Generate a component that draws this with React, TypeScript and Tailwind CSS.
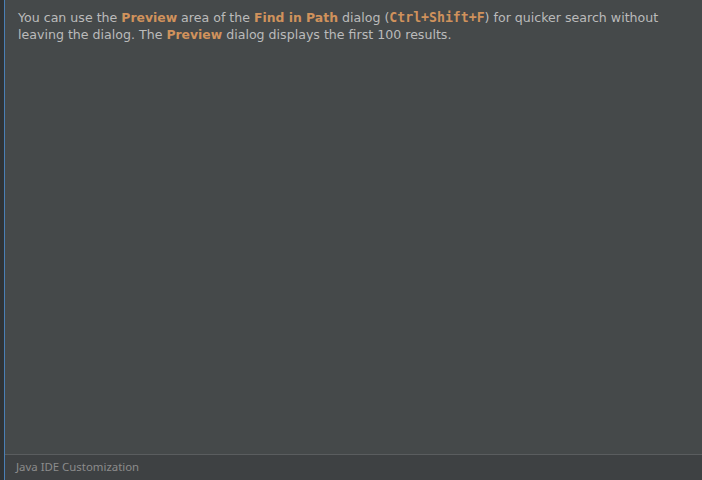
export default function App() {
  const hl = "font-bold text-[#d0925c] text-[12.4px]";
  return (
    <div className="flex h-[480px] w-[702px] bg-[#45494a] font-['DejaVu_Sans',sans-serif]">
      <div className="w-[4px] shrink-0 bg-[#2f3336]" />
      <div className="w-[1px] shrink-0 bg-[#4a7fb5]" />
      <div className="flex min-w-0 flex-1 flex-col">
        <div className="flex-1 pl-[13px] pr-[20px] pt-[9px] text-[12.6px] leading-[17px] text-[#bbbbbb]">
          You can use the <span className={hl}>Preview</span> area of the{" "}
          <span className={hl}>Find in Path</span> dialog (
          <span className="font-['DejaVu_Sans_Mono',monospace] text-[13.2px] font-bold text-[#d0925c]">Ctrl+Shift+F</span>) for quicker search
          without leaving the dialog. The <span className={hl}>Preview</span> dialog displays the first 100 results.
        </div>
        <div className="h-[26px] border-t border-[#5a5d5f] bg-[#3e4143] pl-[11px] pt-[3px] font-['Noto_Sans',sans-serif] text-[11.4px] text-[#8c8c8c]">
          Java IDE Customization
        </div>
      </div>
    </div>
  );
}
